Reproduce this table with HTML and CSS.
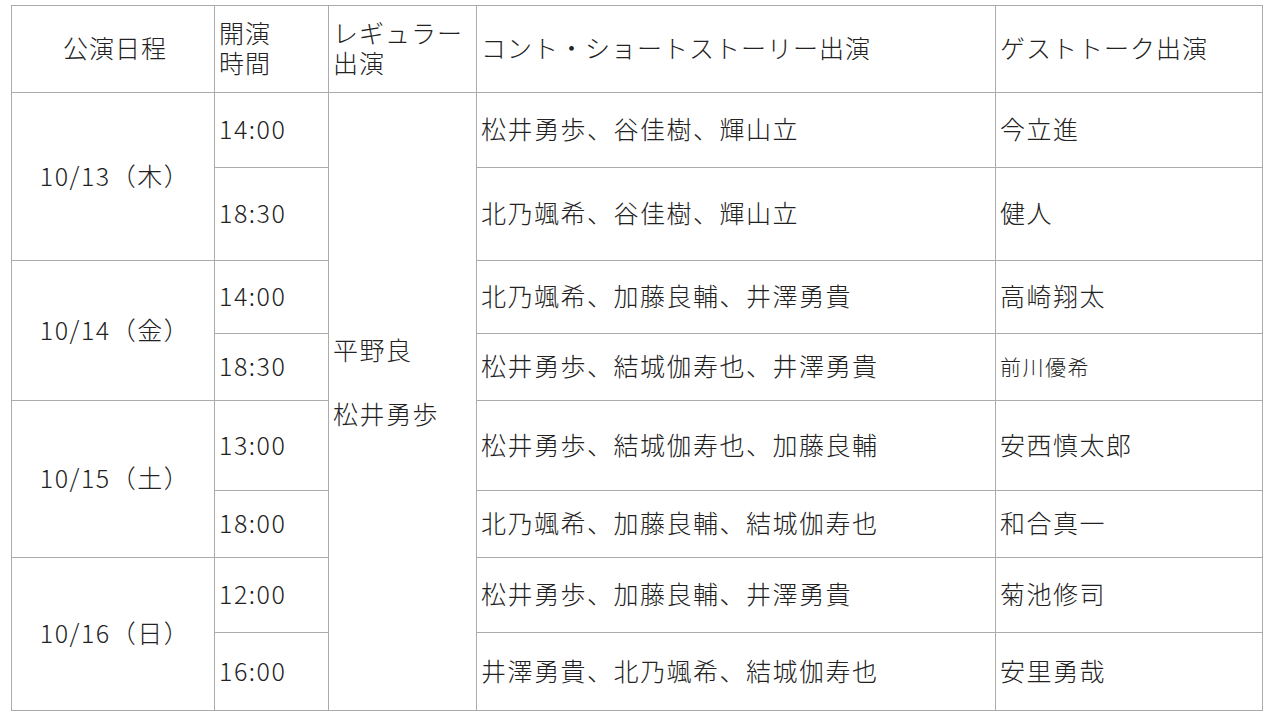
FILE: index.html
```html
<!DOCTYPE html>
<html lang="ja">
<head>
<meta charset="utf-8">
<title>公演日程</title>
<link rel="stylesheet" href="styles.css">
</head>
<body>
<table class="sched">
  <colgroup>
    <col class="c-date"><col class="c-time"><col class="c-reg"><col class="c-cont"><col class="c-guest">
  </colgroup>
  <tr class="r-head">
    <td class="center">公演日程</td>
    <td>開演<br>時間</td>
    <td>レギュラー出演</td>
    <td>コント・ショートストーリー出演</td>
    <td>ゲストトーク出演</td>
  </tr>
  <tr class="r1">
    <td class="center" rowspan="2">10/13（木）</td>
    <td>14:00</td>
    <td rowspan="8" class="reg">平野良<br><br>松井勇歩<br>&nbsp;</td>
    <td>松井勇歩、谷佳樹、輝山立</td>
    <td>今立進</td>
  </tr>
  <tr class="r2">
    <td>18:30</td>
    <td>北乃颯希、谷佳樹、輝山立</td>
    <td>健人</td>
  </tr>
  <tr class="r3">
    <td class="center" rowspan="2">10/14（金）</td>
    <td>14:00</td>
    <td>北乃颯希、加藤良輔、井澤勇貴</td>
    <td>高崎翔太</td>
  </tr>
  <tr class="r4">
    <td>18:30</td>
    <td>松井勇歩、結城伽寿也、井澤勇貴</td>
    <td><span class="small">前川優希</span></td>
  </tr>
  <tr class="r5">
    <td class="center" rowspan="2">10/15（土）</td>
    <td>13:00</td>
    <td>松井勇歩、結城伽寿也、加藤良輔</td>
    <td>安西慎太郎</td>
  </tr>
  <tr class="r6">
    <td>18:00</td>
    <td>北乃颯希、加藤良輔、結城伽寿也</td>
    <td>和合真一</td>
  </tr>
  <tr class="r7">
    <td class="center" rowspan="2">10/16（日）</td>
    <td>12:00</td>
    <td>松井勇歩、加藤良輔、井澤勇貴</td>
    <td>菊池修司</td>
  </tr>
  <tr class="r8">
    <td>16:00</td>
    <td>井澤勇貴、北乃颯希、結城伽寿也</td>
    <td>安里勇哉</td>
  </tr>
</table>
</body>
</html>
```

FILE: styles.css
```css
html, body {
  margin: 0;
  padding: 0;
  background: #ffffff;
}
body {
  padding: 5px 0 0 11px;
  font-family: "Noto Sans CJK JP", "Noto Sans", sans-serif;
  color: #222222;
}
.sched {
  border-collapse: collapse;
  table-layout: fixed;
  width: 1252px;
  font-size: 25px;
  line-height: 32px;
  font-weight: 300;
}
.c-date { width: 203px; }
.c-time { width: 114px; }
.c-reg { width: 148px; }
.c-cont { width: 519px; }
.c-guest { width: 267px; }
.sched td {
  border: 1px solid #ababab;
  padding: 0 4px 4px 4px;
  vertical-align: middle;
  text-align: left;
  letter-spacing: 1.5px;
  overflow: hidden;
}
.sched td.center { text-align: center; padding: 0 0 4px 4px; }
.r-head td { line-height: 30px; letter-spacing: 1px; }
.sched td.reg { padding-bottom: 10px; }
.small { font-size: 21px; }
.r-head { height: 87px; }
.r1 { height: 75px; }
.r2 { height: 93px; }
.r3 { height: 73px; }
.r4 { height: 67px; }
.r5 { height: 90px; }
.r6 { height: 67px; }
.r7 { height: 75px; }
.r8 { height: 78px; }
```
